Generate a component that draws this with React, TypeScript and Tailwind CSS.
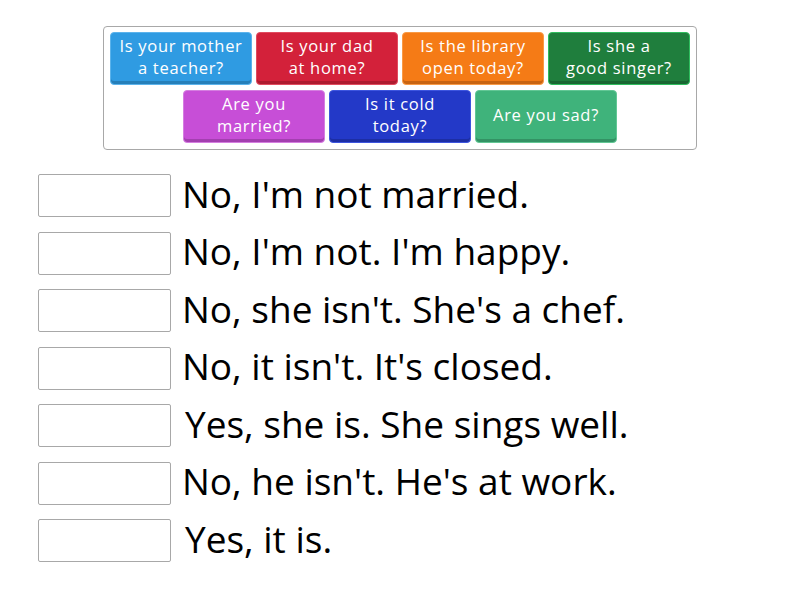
const tiles = [
  { text: ['Is your mother', 'a teacher?'], cls: 'bg-[#2f9be2] border-[#5bb3ec]' },
  { text: ['Is your dad', 'at home?'], cls: 'bg-[#d3213a] border-[#e14a5e]' },
  { text: ['Is the library', 'open today?'], cls: 'bg-[#f57b16] border-[#f99a45]' },
  { text: ['Is she a', 'good singer?'], cls: 'bg-[#1f7e3d] border-[#2fbd5e]' },
  { text: ['Are you', 'married?'], cls: 'bg-[#c74ed7] border-[#d57ee0]' },
  { text: ['Is it cold', 'today?'], cls: 'bg-[#2339c8] border-[#3d55df]' },
  { text: ['Are you sad?'], cls: 'bg-[#3fb37b] border-[#62c795]' },
];

const answers = [
  { text: "No, I'm not married.", shift: false },
  { text: "No, I'm not. I'm happy.", shift: false },
  { text: "No, she isn't. She's a chef.", shift: false },
  { text: "No, it isn't. It's closed.", shift: false },
  { text: 'Yes, she is. She sings well.', shift: true },
  { text: "No, he isn't. He's at work.", shift: false },
  { text: 'Yes, it is.', shift: true },
];

export default function App() {
  return (
    <div className="w-[800px] h-[600px] bg-white font-['Open_Sans',sans-serif]">
      <div className="pt-[26px] flex justify-center">
        <div className="w-[594px] border border-[#a8a8a8] rounded-[4px] px-[6px] pt-[5px] pb-[6px] flex flex-wrap justify-center gap-x-[4px] gap-y-[5px]">
          {tiles.map((t, i) => (
            <div
              key={i}
              className={`w-[142px] h-[53px] rounded-[4px] border ${t.cls} shadow-[inset_0_-3px_0_rgba(0,0,0,0.18)] flex items-center justify-center text-white pb-[3px]`}
            >
              <span className="text-center text-[16.5px] leading-[22.5px] font-medium tracking-[0.7px] whitespace-nowrap">
                {t.text[0]}
                {t.text[1] && <br />}
                {t.text[1]}
              </span>
            </div>
          ))}
        </div>
      </div>

      <div className="mt-[24px] pl-[38px] flex flex-col gap-[14.5px]">
        {answers.map((a, i) => (
          <div key={i} className="flex items-center h-[43px]">
            <div className="w-[133px] h-[43px] border border-[#a8a8a8] rounded-[2px] bg-white" />
            <span
              className={`text-[37px] leading-none text-black ${a.shift ? 'ml-[14px]' : 'ml-[11px]'} -mt-[5px]`}
            >
              {a.text}
            </span>
          </div>
        ))}
      </div>
    </div>
  );
}
